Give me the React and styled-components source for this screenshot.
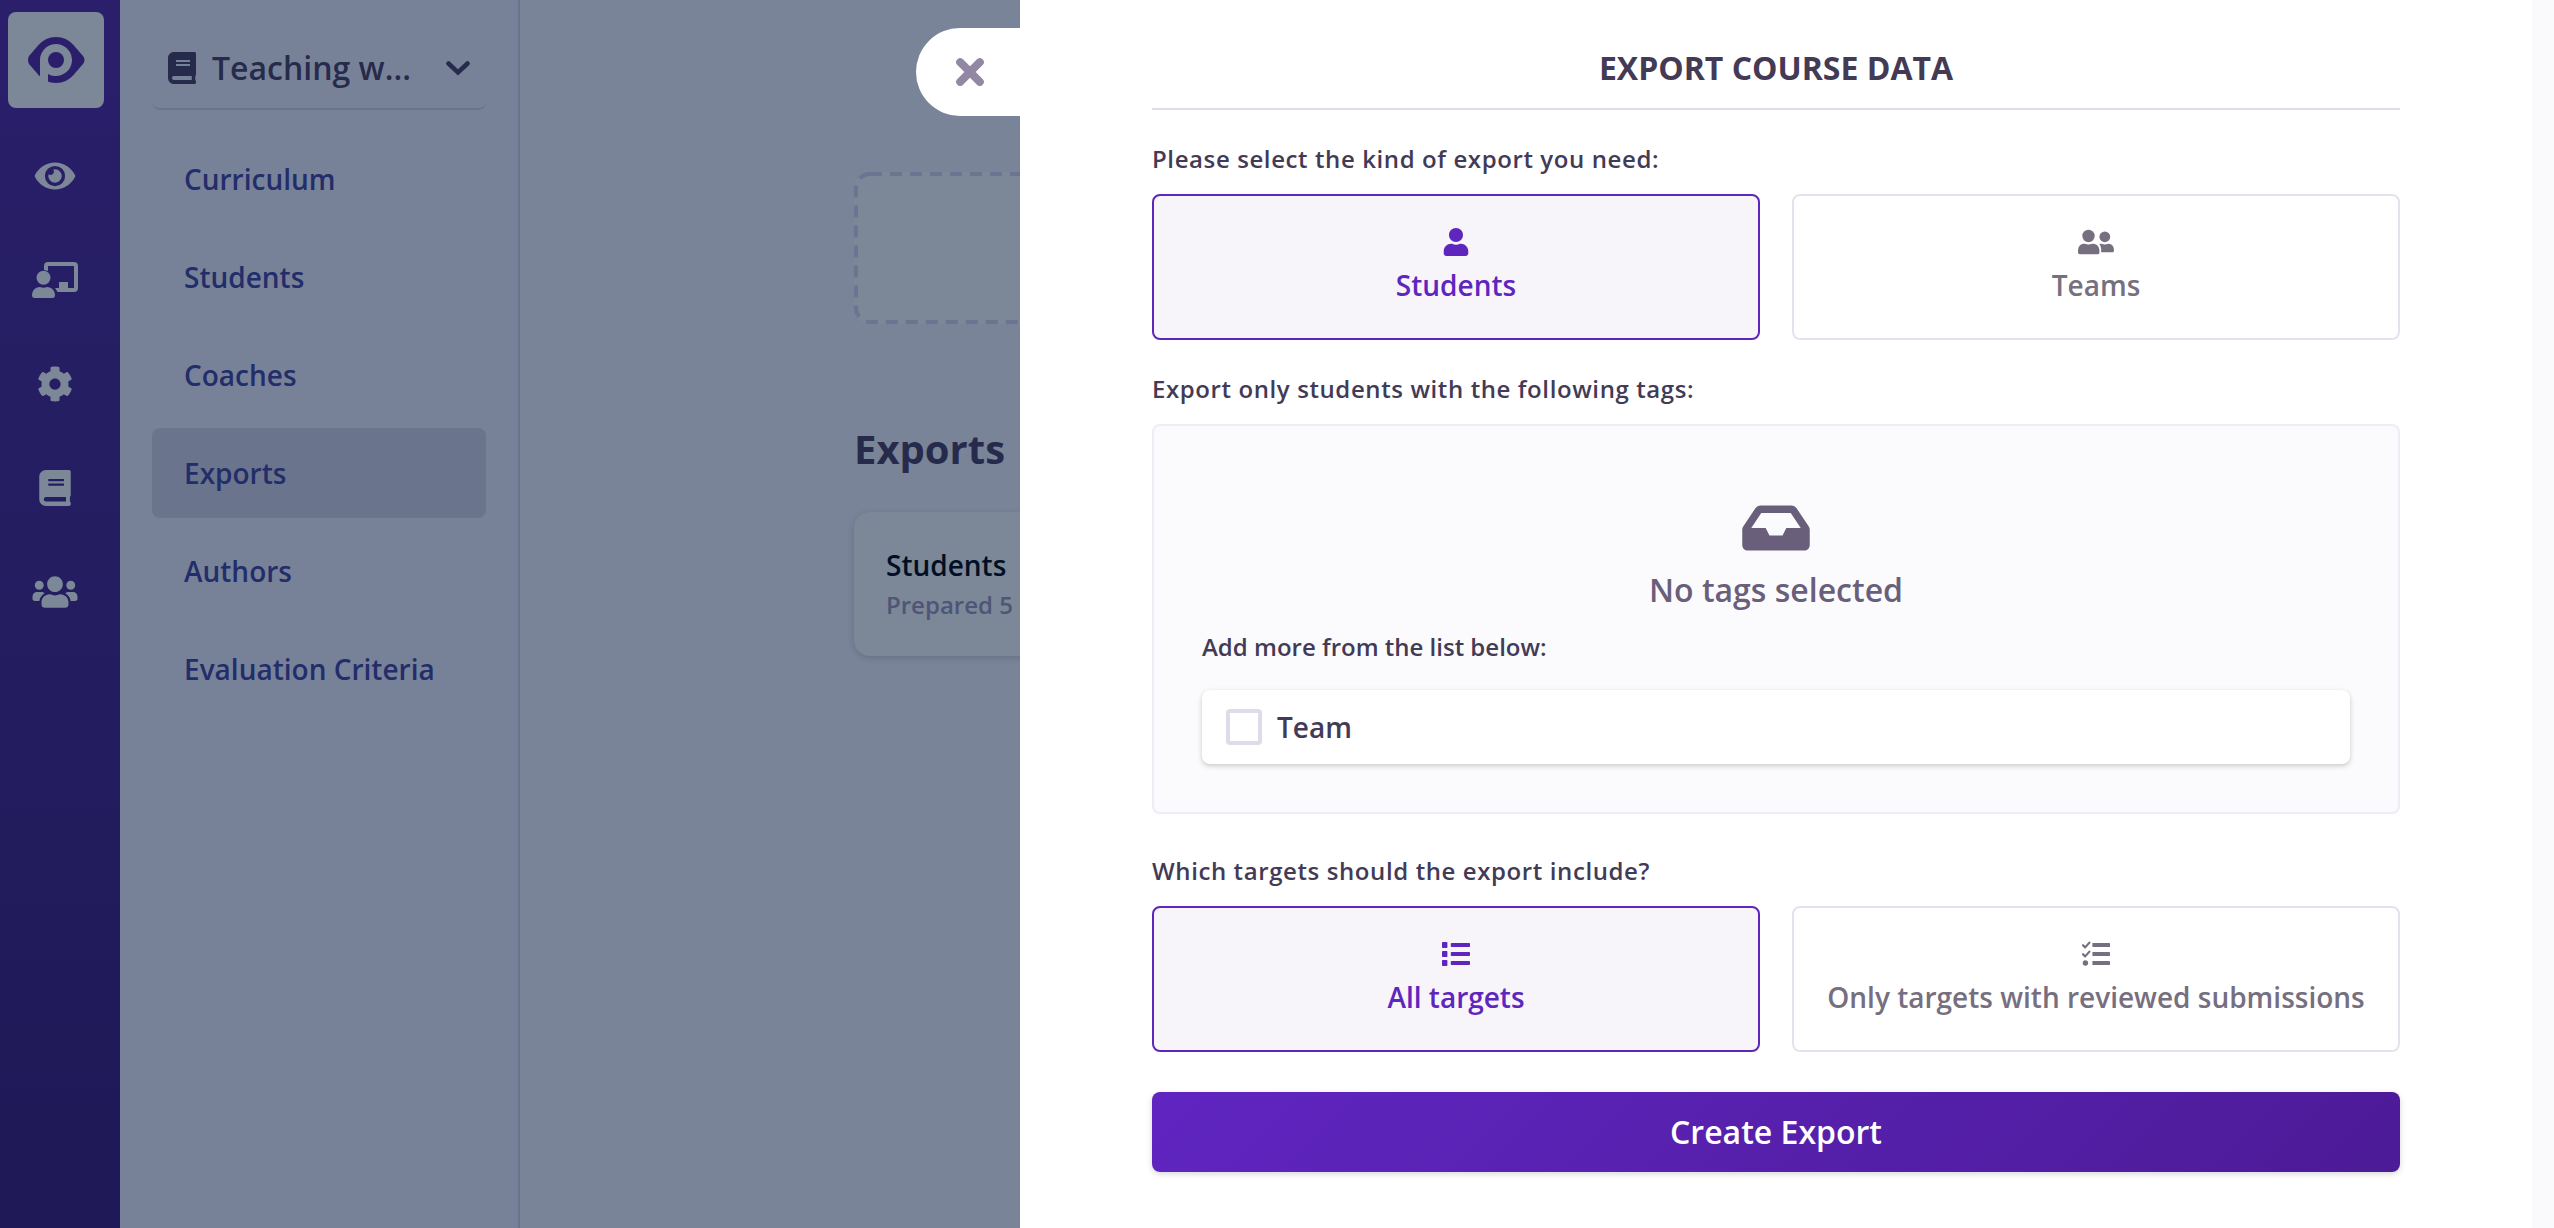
import React, { useState } from "react";
import styled, { createGlobalStyle, css } from "styled-components";
import { FaBook, FaCog, FaEye, FaInbox, FaUser, FaUsers } from "react-icons/fa";

const GlobalStyle = createGlobalStyle`
  *, *::before, *::after { box-sizing: border-box; }
  html, body { margin: 0; }
  body {
    font-family: "Open Sans", "Noto Sans", sans-serif;
    font-weight: 600;
    font-size: 28px;
    line-height: 42px;
    background: #798498;
    overflow: hidden;
  }
  button, input { font: inherit; color: inherit; }
  h1, h2, p, ul { margin: 0; padding: 0; }
  svg { display: block; flex: none; }
`;

const Page = styled.div`
  display: flex;
  min-height: 100vh;
`;

const Rail = styled.nav`
  width: 120px;
  flex: none;
  padding: 12px 16px 12px 8px;
  display: flex;
  flex-direction: column;
  gap: 24px;
  color: #7c8798;
  background: linear-gradient(#2b1f6c, #251e63 30%, #201957);
`;

const LogoLink = styled.a`
  height: 96px;
  display: flex;
  align-items: center;
  justify-content: center;
  border-radius: 8px;
  background: #7c8798;
`;

const RailList = styled.ul`
  display: flex;
  flex-direction: column;
  gap: 16px;
  list-style: none;
`;

const RailLink = styled.a`
  height: 88px;
  padding-right: 2px;
  display: flex;
  align-items: center;
  justify-content: center;
  color: inherit;
  font-size: 36px;
`;

const EyeIcon = styled(FaEye)`
  width: 42px;
  height: 36px;
`;

const UsersIcon = styled(FaUsers)`
  width: 46px;
  height: 36px;
`;

const InboxIcon = styled(FaInbox)`
  width: 68px;
  height: 60px;
`;

const CourseIcon = styled(FaBook)`
  width: 28px;
  height: 32px;
`;

const Sidebar = styled.aside`
  width: 400px;
  flex: none;
  padding: 28px 32px;
  border-right: 2px solid #6b748f;
  background: #778299;
`;

const CourseSwitch = styled.button`
  width: 100%;
  padding: 16px;
  display: flex;
  align-items: center;
  gap: 16px;
  border: 0;
  border-bottom: 2px solid #6b748f;
  border-radius: 8px;
  background: none;
  color: #272b4b;
  font-size: 32px;
  line-height: 48px;
  text-align: left;
`;

const CourseName = styled.span`
  flex: 1;
`;

const NavList = styled.ul`
  margin-top: 24px;
  display: flex;
  flex-direction: column;
  gap: 8px;
  list-style: none;
`;

const NavLink = styled.a`
  display: block;
  padding: 24px 32px;
  border-radius: 8px;
  color: #232d69;
  text-decoration: none;
  background: ${(p) => (p.$active ? "#6a758d" : "none")};
`;

const Main = styled.main`
  flex: 1;
  min-width: 0;
  padding: 172px 22px 0 0;
`;

const MainColumn = styled.div`
  max-width: 1344px;
  margin: 0 auto;
`;

const CreateTile = styled.button`
  display: block;
  width: 100%;
  height: 152px;
  padding: 0;
  border: 0;
  border-radius: 16px;
  background: #7c8798;
  color: #6b7490;
`;

const TileOutline = styled.svg`
  width: 100%;
  height: 100%;
  overflow: hidden;

  rect {
    width: calc(100% - 4px);
    height: calc(100% - 4px);
  }
`;

const MainHeading = styled.h2`
  margin: 95px 0 33px;
  color: #272b4b;
  font-size: 40px;
  line-height: 60px;
  font-weight: 700;
`;

const ExportCard = styled.article`
  padding: 32px;
  border-radius: 16px;
  background: #7c8798;
  box-shadow: 0 2px 6px rgba(30, 40, 70, 0.2);
`;

const ExportName = styled.p`
  color: #010f24;
`;

const ExportMeta = styled.p`
  color: #4e5577;
  font-size: 24px;
  line-height: 38px;
`;

const Drawer = styled.section`
  position: fixed;
  top: 0;
  right: 0;
  bottom: 0;
  width: 100%;
  max-width: 1534px;
  display: flex;
  background: #ffffff;
`;

const CloseButton = styled.button`
  position: absolute;
  top: 28px;
  right: 100%;
  width: 104px;
  height: 88px;
  padding: 0 0 0 4px;
  display: flex;
  align-items: center;
  justify-content: center;
  border: 0;
  border-radius: 44px 0 0 44px;
  background: #ffffff;
  color: #9388a3;
`;

const DrawerBody = styled.form`
  flex: 1;
  min-width: 0;
  padding: 44px 32px;
`;

const ScrollTrack = styled.div`
  width: 22px;
  flex: none;
  background: #fafafc;
`;

const DrawerColumn = styled.div`
  max-width: 1248px;
  margin: 0 auto;
  color: #433b56;
`;

const DrawerTitle = styled.h1`
  padding-bottom: 16px;
  border-bottom: 2px solid #dedcec;
  font-size: 32px;
  line-height: 48px;
  font-weight: 700;
  text-align: center;
  text-transform: uppercase;
`;

const Group = styled.div`
  margin-top: ${(p) => (p.$spaced ? 38 : 30)}px;
`;

const GroupLabel = styled.p`
  margin-bottom: 16px;
  font-size: 24px;
  line-height: 38px;
  letter-spacing: 0.025em;
`;

const Choices = styled.div`
  display: grid;
  grid-template-columns: 1fr 1fr;
  gap: 32px;
`;

const ChoiceButton = styled.button`
  padding: 32px 16px;
  display: flex;
  flex-direction: column;
  align-items: center;
  gap: 8px;
  border: 2px solid #e4e2ee;
  border-radius: 8px;
  background: #ffffff;
  color: #766f80;
  ${(p) =>
    p.$selected &&
    css`
      border-color: #5f26be;
      background: #f7f5fa;
      color: #5f26be;
    `}
`;

const TagPanel = styled.div`
  padding: 48px;
  border: 2px solid #eeecf6;
  border-radius: 8px;
  background: #fbfbfe;
`;

const EmptyTags = styled.div`
  padding: 24px 0 14px;
  display: flex;
  flex-direction: column;
  align-items: center;
  gap: 8px;
  color: #6a5f7a;
  font-size: 32px;
  line-height: 48px;
`;

const ListHint = styled.p`
  margin-bottom: 24px;
  font-size: 24px;
  line-height: 38px;
`;

const TagRow = styled.label`
  padding: 16px 24px;
  display: flex;
  align-items: center;
  gap: 15px;
  border-radius: 8px;
  background: #ffffff;
  box-shadow: 0 2px 6px rgba(0, 0, 0, 0.1), 0 2px 4px rgba(0, 0, 0, 0.1);
`;

const TagCheckbox = styled.input`
  appearance: none;
  width: 36px;
  height: 36px;
  margin: 0;
  border: 4px solid #dedbea;
  border-radius: 4px;
  background: #ffffff;
  &:checked {
    background: #5f26be;
  }
`;

const SubmitButton = styled.button`
  width: 100%;
  margin-top: 40px;
  padding: 16px;
  border: 0;
  border-radius: 8px;
  background: linear-gradient(135deg, #6025c1, #4c1b97);
  box-shadow: 0 2px 6px rgba(0, 0, 0, 0.16);
  color: #ffffff;
  font-size: 32px;
  line-height: 48px;
`;

const Logo = () => (
  <svg width="57" height="46" viewBox="0 0 57 46" aria-hidden="true">
    <path
      fill="#2b1f6c"
      d="M28 0C35 0 41 3 45 7.500L55 19Q58 23 55 27L45 38.500C41 43 35 46 28 46C21 46 15 43 11 38.500L1 27Q-1 23 1 19L11 7.500C15 3 21 0 28 0Z"
    />
    <path fill="#7c8798" d="M12 23a16 16 0 1 1 8 13.900V46h-8z" />
    <circle cx="28" cy="23" r="8" fill="#2b1f6c" />
  </svg>
);

const CoachIcon = () => (
  <svg width="46" height="36" viewBox="0 0 46 36" fill="currentColor" aria-hidden="true">
    <path d="M12 8V4a4 4 0 0 1 4-4h26a4 4 0 0 1 4 4v22a4 4 0 0 1-4 4H25.500l-2.500-4h4v-6h9v6h6V4H16v5z" />
    <circle cx="11.500" cy="15.800" r="7" />
    <path d="M8 25c2 1 5 1 7 0c5 0 8 4 8 8.500c0 1.500-1 2.500-2.500 2.500h-18C1 36 0 35 0 33.500C0 29 3 25 8 25z" />
  </svg>
);

const ChevronIcon = () => (
  <svg width="24" height="16" viewBox="0 0 24 16" fill="none" aria-hidden="true">
    <path d="M2.500 3.500L12 12.500L21.500 3.500" stroke="currentColor" strokeWidth="4.500" strokeLinecap="round" />
  </svg>
);

const CloseIcon = () => (
  <svg width="28" height="28" viewBox="0 0 28 28" fill="none" aria-hidden="true">
    <path d="M4.200 4.200L23.800 23.800M23.800 4.200L4.200 23.800" stroke="currentColor" strokeWidth="8" strokeLinecap="round" />
  </svg>
);

const TeamIcon = () => (
  <svg width="36" height="28" viewBox="0 0 36 28" fill="currentColor" aria-hidden="true">
    <circle cx="10.500" cy="8" r="6.200" />
    <path d="M7 15.700c2 1 5 1 7 0c5 0 7.500 2.500 7.500 8c0 1.800-.6 2.500-2 2.500h-17.500c-1.400 0-2-.7-2-2.500c0-5.500 2-8 7-8z" />
    <circle cx="26.800" cy="8.800" r="5.400" />
    <path d="M21.300 15.700h2c2 1 5 1 7 0c4 0 5.700 3 5.700 6.500c0 1.500-.6 2-1.800 2H23.200c.2-3.500-.4-6.500-1.900-8.500z" />
  </svg>
);

const ListIcon = () => (
  <svg width="28" height="28" viewBox="0 0 28 28" fill="currentColor" aria-hidden="true">
    {[5, 14, 23].map((y) => (
      <g key={y}>
        <rect x="0" y={y - 3} width="5.400" height="6" rx="0.800" />
        <rect x="8.800" y={y - 2} width="19.200" height="4" rx="0.800" />
      </g>
    ))}
  </svg>
);

const ReviewedIcon = () => (
  <svg width="28" height="28" viewBox="0 0 28 28" fill="currentColor" aria-hidden="true">
    {[5, 14, 23].map((y) => (
      <rect key={y} x="10.400" y={y - 2} width="17.600" height="4" rx="0.600" />
    ))}
    {[5, 14].map((y) => (
      <path
        key={y}
        d={`M1 ${y + 0.2}l2.200 2.200L7.400 ${y - 2.4}`}
        fill="none"
        stroke="currentColor"
        strokeWidth="2.200"
        strokeLinecap="round"
        strokeLinejoin="round"
      />
    ))}
    <circle cx="3.400" cy="23" r="2.700" />
  </svg>
);

const railItems = [
  { name: "Overview", icon: <EyeIcon /> },
  { name: "Coaching", icon: <CoachIcon /> },
  { name: "Settings", icon: <FaCog /> },
  { name: "Courses", icon: <FaBook /> },
  { name: "Users", icon: <UsersIcon /> },
];

const navItems = ["Curriculum", "Students", "Coaches", "Exports", "Authors", "Evaluation Criteria"];

const exportKinds = [
  { name: "Students", icon: <FaUser size={28} /> },
  { name: "Teams", icon: <TeamIcon /> },
];

const targetKinds = [
  { name: "All targets", icon: <ListIcon /> },
  { name: "Only targets with reviewed submissions", icon: <ReviewedIcon /> },
];

function ChoiceGroup({ id, label, options, spaced }) {
  const [selected, setSelected] = useState(options[0].name);
  return (
    <Group $spaced={spaced} role="group" aria-labelledby={id}>
      <GroupLabel id={id}>{label}</GroupLabel>
      <Choices>
        {options.map((option) => (
          <ChoiceButton
            key={option.name}
            type="button"
            aria-pressed={option.name === selected}
            $selected={option.name === selected}
            onClick={() => setSelected(option.name)}
          >
            {option.icon}
            <span>{option.name}</span>
          </ChoiceButton>
        ))}
      </Choices>
    </Group>
  );
}

export default function App() {
  return (
    <>
      <GlobalStyle />
      <Page>
        <Rail>
          <LogoLink href="#" aria-label="Home">
            <Logo />
          </LogoLink>
          <RailList>
            {railItems.map((item) => (
              <li key={item.name}>
                <RailLink href="#" aria-label={item.name}>
                  {item.icon}
                </RailLink>
              </li>
            ))}
          </RailList>
        </Rail>
        <Sidebar>
          <CourseSwitch type="button">
            <CourseIcon />
            <CourseName>Teaching w...</CourseName>
            <ChevronIcon />
          </CourseSwitch>
          <NavList>
            {navItems.map((name) => (
              <li key={name}>
                <NavLink href="#" $active={name === "Exports"}>
                  {name}
                </NavLink>
              </li>
            ))}
          </NavList>
        </Sidebar>
        <Main>
          <MainColumn>
            <CreateTile type="button" aria-label="Create New Export">
              <TileOutline aria-hidden="true">
                <rect
                  x="2"
                  y="2"
                  rx="14"
                  fill="none"
                  stroke="currentColor"
                  strokeWidth="4"
                  strokeDasharray="12 8"
                />
              </TileOutline>
            </CreateTile>
            <MainHeading>Exports</MainHeading>
            <ExportCard>
              <ExportName>Students</ExportName>
              <ExportMeta>Prepared 5</ExportMeta>
            </ExportCard>
          </MainColumn>
        </Main>
      </Page>
      <Drawer aria-labelledby="drawer-title">
        <CloseButton type="button" aria-label="Close">
          <CloseIcon />
        </CloseButton>
        <DrawerBody onSubmit={(event) => event.preventDefault()}>
          <DrawerColumn>
            <DrawerTitle id="drawer-title">Export course data</DrawerTitle>
            <ChoiceGroup
              id="kind-label"
              label="Please select the kind of export you need:"
              options={exportKinds}
            />
            <Group role="group" aria-labelledby="tags-label">
              <GroupLabel id="tags-label">Export only students with the following tags:</GroupLabel>
              <TagPanel>
                <EmptyTags>
                  <InboxIcon />
                  <p>No tags selected</p>
                </EmptyTags>
                <ListHint>Add more from the list below:</ListHint>
                <TagRow>
                  <TagCheckbox type="checkbox" />
                  <span>Team</span>
                </TagRow>
              </TagPanel>
            </Group>
            <ChoiceGroup
              id="targets-label"
              label="Which targets should the export include?"
              options={targetKinds}
              spaced
            />
            <SubmitButton type="submit">Create Export</SubmitButton>
          </DrawerColumn>
        </DrawerBody>
        <ScrollTrack />
      </Drawer>
    </>
  );
}
